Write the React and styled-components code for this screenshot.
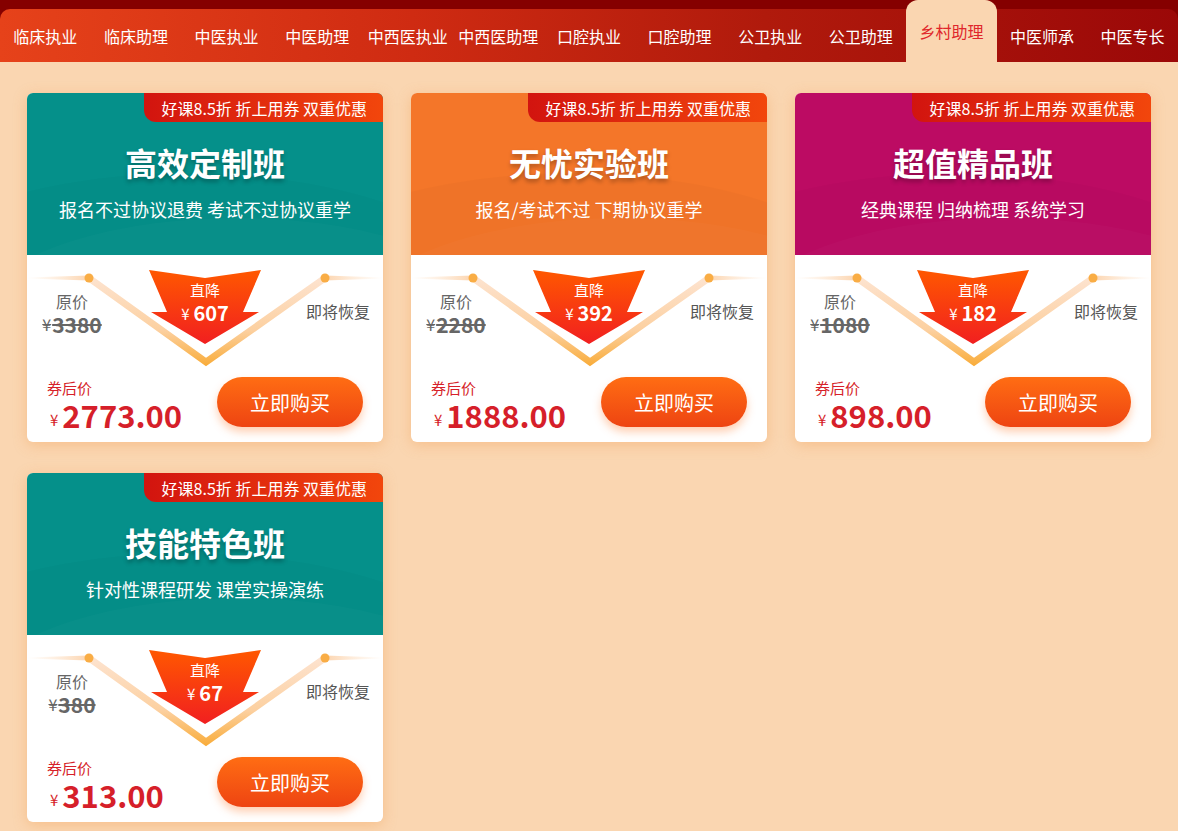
import React from 'react';
import styled, { createGlobalStyle } from 'styled-components';

const GlobalStyle = createGlobalStyle`
  html, body {
    margin: 0;
    padding: 0;
    background: #fad6b1;
  }
  body {
    font-family: "Noto Sans CJK SC", "Liberation Sans", sans-serif;
  }
`;

const tabs = [
  '临床执业', '临床助理', '中医执业', '中医助理', '中西医执业', '中西医助理',
  '口腔执业', '口腔助理', '公卫执业', '公卫助理', '乡村助理', '中医师承', '中医专长',
];

const courses = [
  { title: '高效定制班', sub: '报名不过协议退费 考试不过协议重学', color: '#05908a', orig: '3380', drop: '607', price: '2773.00' },
  { title: '无忧实验班', sub: '报名/考试不过 下期协议重学', color: '#f47629', orig: '2280', drop: '392', price: '1888.00' },
  { title: '超值精品班', sub: '经典课程 归纳梳理 系统学习', color: '#bc0b63', orig: '1080', drop: '182', price: '898.00' },
  { title: '技能特色班', sub: '针对性课程研发 课堂实操演练', color: '#05908a', orig: '380', drop: '67', price: '313.00' },
];

const Page = styled.div`
  min-height: 831px;
  background: #fad6b1;
`;

const TopBar = styled.div`
  background: #850000;
  padding-top: 9px;
`;

const Nav = styled.nav`
  display: flex;
  height: 53px;
  border-radius: 10px 10px 0 0;
  background: linear-gradient(90deg, #e6421a 0%, #cf2b12 35%, #b01a0c 65%, #9b0808 100%);
`;

const Tab = styled.div`
  flex: 1;
  display: flex;
  align-items: center;
  justify-content: center;
  font-size: 16px;
  white-space: nowrap;
  color: ${(p) => (p.$active ? '#e0262b' : '#ffffff')};
  ${(p) =>
    p.$active &&
    `
    margin-top: -9px;
    background: #fad6b1;
    border-radius: 12px 12px 0 0;
  `}
`;

const Grid = styled.div`
  display: grid;
  grid-template-columns: repeat(3, 356px);
  column-gap: 28px;
  row-gap: 31px;
  padding: 31px 27px 8px;
`;

const Card = styled.div`
  height: 349px;
  background: #fff;
  border-radius: 6px;
  overflow: hidden;
  box-shadow: 0 3px 14px rgba(240, 150, 70, 0.35);
  display: flex;
  flex-direction: column;
`;

const Head = styled.div`
  position: relative;
  height: 162px;
  box-sizing: border-box;
  padding-top: 49px;
  background: ${(p) => p.$color};
  overflow: hidden;
  display: flex;
  flex-direction: column;
  align-items: center;
  &::before {
    content: '';
    position: absolute;
    left: -160px;
    top: 80px;
    width: 640px;
    height: 280px;
    border-radius: 50%;
    background: rgba(0, 0, 0, 0.018);
  }
  &::after {
    content: '';
    position: absolute;
    left: -60px;
    top: 125px;
    width: 540px;
    height: 220px;
    border-radius: 50%;
    background: rgba(255, 255, 255, 0.02);
  }
`;

const Badge = styled.div`
  position: absolute;
  top: 0;
  right: 0;
  z-index: 2;
  height: 29px;
  padding: 0 16px 0 18px;
  display: flex;
  align-items: center;
  font-size: 16px;
  color: #fff;
  white-space: nowrap;
  border-radius: 0 0 0 12px;
  background: linear-gradient(90deg, #d2140f, #f2460c);
`;

const Title = styled.div`
  position: relative;
  z-index: 1;
  font-size: 32px;
  line-height: 40px;
  font-weight: 700;
  color: #fff;
  text-shadow: 0 3px 4px rgba(0, 0, 0, 0.28);
`;

const Sub = styled.div`
  position: relative;
  z-index: 1;
  margin-top: 14px;
  font-size: 18px;
  line-height: 26px;
  color: #fff;
`;

const DealRow = styled.div`
  position: relative;
  height: 115px;
  display: grid;
  grid-template-columns: 90px 1fr 90px;
`;

const VLines = styled.svg`
  position: absolute;
  left: 0;
  top: 0;
  width: 356px;
  height: 115px;
`;

const OldCol = styled.div`
  position: relative;
  padding-top: 35px;
  display: flex;
  flex-direction: column;
  align-items: center;
  color: #666;
`;

const OldLabel = styled.div`
  font-size: 16px;
  line-height: 22px;
`;

const OldPrice = styled.div`
  margin-top: 1px;
  height: 22px;
  display: flex;
  align-items: center;
  text-decoration: line-through;
  white-space: nowrap;
`;

const Yen = styled.span`
  display: inline-block;
  font-size: ${(p) => p.$size || 15}px;
  line-height: ${(p) => p.$size || 15}px;
  font-weight: 400;
  margin-right: ${(p) => p.$gap || 1}px;
`;

const OldNum = styled.span`
  display: inline-block;
  font-size: 21px;
  line-height: 22px;
  font-weight: 700;
`;

const ArrowCol = styled.div`
  display: flex;
  justify-content: center;
`;

const ArrowBox = styled.div`
  position: relative;
  width: 112px;
  height: 74px;
  margin-top: 15px;
`;

const ArrowShape = styled.svg`
  position: absolute;
  left: -3px;
  top: -3px;
  width: 118px;
  height: 80px;
`;

const ArrowText = styled.div`
  position: absolute;
  inset: 0;
  padding-top: 9px;
  display: flex;
  flex-direction: column;
  align-items: center;
  color: #fff;
`;

const DropLabel = styled.div`
  font-size: 15px;
  line-height: 22px;
`;

const DropPrice = styled.div`
  height: 24px;
  display: flex;
  align-items: center;
  white-space: nowrap;
`;

const DropNum = styled.span`
  display: inline-block;
  font-size: 20px;
  line-height: 24px;
  font-weight: 700;
`;

const SoonCol = styled.div`
  position: relative;
  padding-top: 45px;
  display: flex;
  justify-content: center;
  font-size: 16px;
  line-height: 22px;
  color: #555;
  white-space: nowrap;
`;

const BottomRow = styled.div`
  display: flex;
  justify-content: space-between;
  align-items: flex-start;
  margin-top: 7px;
  padding: 0 20px;
`;

const FinalBlock = styled.div`
  padding-top: 1px;
  color: #d61f2a;
`;

const FinalLabel = styled.div`
  font-size: 15px;
  line-height: 20px;
`;

const FinalPrice = styled.div`
  height: 34px;
  padding-left: 3px;
  display: flex;
  align-items: flex-end;
  white-space: nowrap;
`;

const FinalYen = styled.span`
  display: inline-block;
  font-size: 15px;
  line-height: 20px;
  margin-right: 4px;
  margin-bottom: 2px;
`;

const FinalNum = styled.span`
  display: inline-block;
  font-size: 31px;
  line-height: 34px;
  font-weight: 700;
`;

const BuyButton = styled.button`
  width: 146px;
  height: 50px;
  border: none;
  border-radius: 25px;
  font-family: inherit;
  font-size: 20px;
  color: #fff;
  background: linear-gradient(180deg, #ff6d13 0%, #ee4412 100%);
  box-shadow: 0 5px 8px rgba(255, 120, 40, 0.35);
  cursor: pointer;
`;

function VDecor() {
  return (
    <VLines viewBox="0 0 356 115">
      <defs>
        <linearGradient id="hlLeft" x1="0" y1="0" x2="1" y2="0">
          <stop offset="0" stopColor="#fde2c8" stopOpacity="0" />
          <stop offset="1" stopColor="#fcd4ae" />
        </linearGradient>
        <linearGradient id="hlRight" x1="1" y1="0" x2="0" y2="0">
          <stop offset="0" stopColor="#fde2c8" stopOpacity="0" />
          <stop offset="1" stopColor="#fcd4ae" />
        </linearGradient>
        <linearGradient id="vBand" gradientUnits="userSpaceOnUse" x1="0" y1="23" x2="0" y2="110">
          <stop offset="0" stopColor="#fde3cf" />
          <stop offset="0.6" stopColor="#fcd0a0" />
          <stop offset="1" stopColor="#f9ad3c" />
        </linearGradient>
      </defs>
      <polygon points="0,22.5 62,20.5 62,25.5 0,23.5" fill="url(#hlLeft)" />
      <polygon points="356,22.5 298,20.5 298,25.5 356,23.5" fill="url(#hlRight)" />
      <polyline
        points="62,23 179,107 298,23"
        fill="none"
        stroke="url(#vBand)"
        strokeWidth="7"
        strokeLinejoin="miter"
      />
      <circle cx="62" cy="23" r="4.5" fill="#f9ad45" />
      <circle cx="298" cy="23" r="4.5" fill="#f9ad45" />
    </VLines>
  );
}

function DropArrow({ drop }) {
  return (
    <ArrowBox>
      <ArrowShape viewBox="-3 -3 118 80">
        <defs>
          <linearGradient id="arrowFill" x1="0" y1="0" x2="0" y2="1">
            <stop offset="0" stopColor="#ff5800" />
            <stop offset="1" stopColor="#f11f20" />
          </linearGradient>
        </defs>
        <polygon
          points="0,0 56,8 112,0 94,42 110,42 56,74 2,42 18,42"
          fill="url(#arrowFill)"
          stroke="#fff"
          strokeWidth="5"
          strokeLinejoin="round"
          paintOrder="stroke"
        />
      </ArrowShape>
      <ArrowText>
        <DropLabel>直降</DropLabel>
        <DropPrice>
          <Yen $size={15} $gap={4}>¥</Yen>
          <DropNum>{drop}</DropNum>
        </DropPrice>
      </ArrowText>
    </ArrowBox>
  );
}

function CourseCard({ course }) {
  return (
    <Card>
      <Head $color={course.color}>
        <Badge>好课8.5折 折上用券 双重优惠</Badge>
        <Title>{course.title}</Title>
        <Sub>{course.sub}</Sub>
      </Head>
      <DealRow>
        <VDecor />
        <OldCol>
          <OldLabel>原价</OldLabel>
          <OldPrice>
            <Yen $size={16} $gap={1}>¥</Yen>
            <OldNum>{course.orig}</OldNum>
          </OldPrice>
        </OldCol>
        <ArrowCol>
          <DropArrow drop={course.drop} />
        </ArrowCol>
        <SoonCol>即将恢复</SoonCol>
      </DealRow>
      <BottomRow>
        <FinalBlock>
          <FinalLabel>券后价</FinalLabel>
          <FinalPrice>
            <FinalYen>¥</FinalYen>
            <FinalNum>{course.price}</FinalNum>
          </FinalPrice>
        </FinalBlock>
        <BuyButton>立即购买</BuyButton>
      </BottomRow>
    </Card>
  );
}

export default function App() {
  return (
    <Page>
      <GlobalStyle />
      <TopBar>
        <Nav>
          {tabs.map((t) => (
            <Tab key={t} $active={t === '乡村助理'}>
              {t}
            </Tab>
          ))}
        </Nav>
      </TopBar>
      <Grid>
        {courses.map((c) => (
          <CourseCard key={c.title} course={c} />
        ))}
      </Grid>
    </Page>
  );
}
